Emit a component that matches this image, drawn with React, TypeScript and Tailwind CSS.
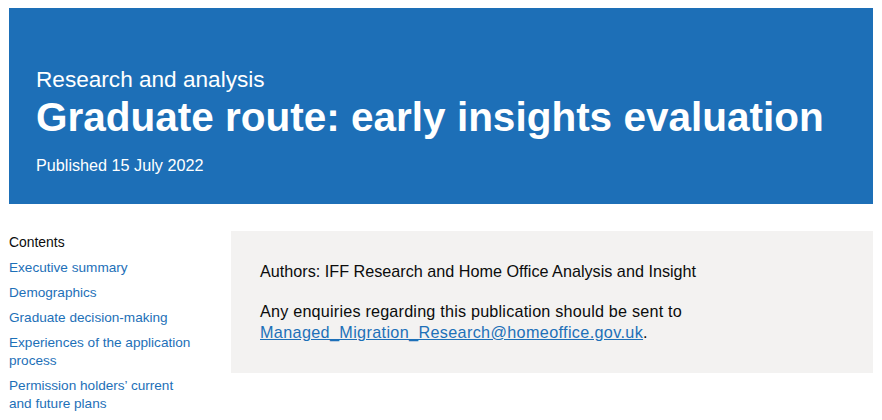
const links = [
    "Executive summary",
    "Demographics",
    "Graduate decision-making",
    "Experiences of the application process",
    "Permission holders’ current and future plans",
];

const App = () => {
    return (
        <div className="min-h-[420px] bg-white px-[9px] pt-2 font-['Liberation_Sans',Arial,sans-serif] text-[#0b0c0c]">
            <header className="h-[196px] bg-[#1d6fb7] px-[27px] pt-[57px] text-white">
                <p className="text-[22.6px] leading-[30px]">Research and analysis</p>
                <h1 className="text-[40.5px] font-bold leading-[44px]">
                    Graduate route: early insights evaluation
                </h1>
                <p className="mt-[15px] text-[16.2px] leading-[22px]">Published 15 July 2022</p>
            </header>

            <div className="mt-[27px] flex items-start gap-4">
                <nav className="w-[206px] shrink-0 pr-[20px] pt-[2px]">
                    <h2 className="text-[13.9px] leading-[18px] text-[#0b0c0c]">Contents</h2>
                    <ul className="mt-[8px] flex flex-col gap-[7px]">
                        {links.map((l) => (
                            <li key={l}>
                                <a href="#" className="block text-[13.6px] leading-[18px] text-[#1d70b8]">
                                    {l}
                                </a>
                            </li>
                        ))}
                    </ul>
                </nav>

                <section className="flex-1 bg-[#f3f2f1] px-[29px] pb-[30px] pt-[30px] text-[16.2px] leading-[21px]">
                    <p>Authors: IFF Research and Home Office Analysis and Insight</p>
                    <p className="mt-[19px]">
                        <span className="tracking-[0.2px]">Any enquiries regarding this publication should be sent to</span>
                        <br />
                        <a href="#" className="tracking-[0.35px] text-[#1d70b8] underline">
                            Managed_Migration_Research@homeoffice.gov.uk
                        </a>
                        .
                    </p>
                </section>
            </div>
        </div>
    );
};

export default App;
